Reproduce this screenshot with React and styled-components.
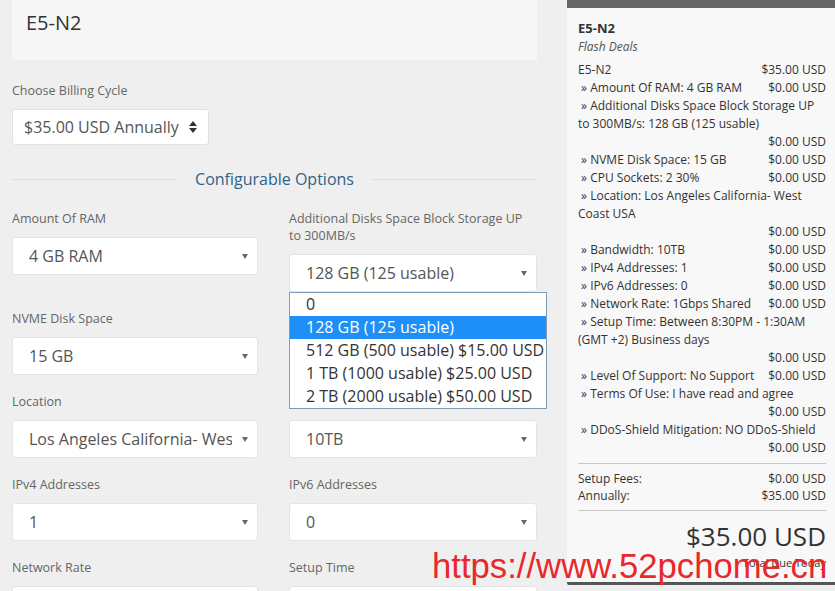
import React from "react";
import styled, { createGlobalStyle } from "styled-components";

const GlobalStyle = createGlobalStyle`
  html, body {
    margin: 0;
    padding: 0;
    background: #efefef;
    overflow: hidden;
  }
  body {
    font-family: "Open Sans", "Liberation Sans", sans-serif;
  }
`;

const Page = styled.div`
  position: relative;
  display: flex;
  gap: 30px;
  width: 835px;
  height: 591px;
  overflow: hidden;
  padding-left: 12px;
  box-sizing: border-box;
`;

const Main = styled.div`
  width: 525px;
  flex-shrink: 0;
`;

const ProductBox = styled.div`
  background: #f7f7f7;
  height: 60px;
  padding: 9px 14px 0;
  box-sizing: border-box;
  font-size: 20px;
  line-height: 27px;
  color: #333;
`;

const Label = styled.div`
  font-size: 12.5px;
  line-height: 17px;
  color: #666;
  padding-right: 12px;
  margin-top: ${(p) => p.$top || 0}px;
  margin-bottom: 10px;
`;

const BillingSelect = styled.div`
  width: 197px;
  height: 36px;
  box-sizing: border-box;
  background: #fff;
  border: 1px solid #e2e2e2;
  border-radius: 3px;
  padding: 0 11px 0 11px;
  display: flex;
  align-items: center;
  justify-content: space-between;
  font-size: 16px;
  color: #555;
`;

const Heading = styled.div`
  margin-top: 23px;
  display: flex;
  align-items: center;
  gap: 18px;
  font-size: 16px;
  line-height: 22px;
  color: #2f6389;

  &::before,
  &::after {
    content: "";
    flex: 1;
    height: 1px;
    background: #dcdcdc;
  }
`;

const Grid = styled.div`
  margin-top: 20px;
  display: grid;
  grid-template-columns: 246px 248px;
  column-gap: 31px;
  row-gap: 18px;
  align-items: start;
`;

const Field = styled.div`
  position: relative;
`;

const Select = styled.div`
  height: 38px;
  box-sizing: border-box;
  background: #fff;
  border: 1px solid #e4e4e4;
  border-radius: 3px;
  padding: 0 9px 0 16px;
  display: flex;
  align-items: center;
  gap: 10px;
  font-size: 16px;
  color: #555;
`;

const Value = styled.span`
  flex: 1;
  white-space: nowrap;
  overflow: hidden;
`;

const Caret = styled.span`
  width: 0;
  height: 0;
  border-left: 3.5px solid transparent;
  border-right: 3.5px solid transparent;
  border-top: 5px solid #666;
`;

const OptionList = styled.div`
  position: absolute;
  left: 0;
  top: 100%;
  width: 258px;
  box-sizing: border-box;
  background: #fff;
  border: 1px solid #7f9db9;
  z-index: 5;
`;

const Option = styled.div`
  font-size: 16px;
  line-height: 23px;
  padding-left: 16px;
  white-space: nowrap;
  color: ${(p) => (p.$active ? "#fff" : "#333")};
  background: ${(p) => (p.$active ? "#1e8ff7" : "transparent")};
`;

const Sidebar = styled.div`
  width: 268px;
  flex-shrink: 0;
  align-self: flex-start;
  background: #f8f8f8;
  border-top: 8px solid #666;
  border-bottom: 3px solid #555;
  border-bottom-left-radius: 2px;
  padding: 11px 9px 12px 11px;
  box-sizing: border-box;
  color: #333;
  font-size: 12px;
  line-height: 18px;
`;

const SumTitle = styled.div`
  font-size: 13px;
  font-weight: 700;
  line-height: 18px;
`;

const SumSub = styled.div`
  font-style: italic;
  color: #555;
  margin-top: 1px;
  margin-bottom: 5px;
`;

const Item = styled.div`
  display: flex;
  flex-wrap: wrap;
  justify-content: space-between;
  line-height: ${(p) => p.$lh || 18}px;
`;

const Price = styled.span`
  margin-left: auto;
  white-space: nowrap;
`;

const Rule = styled.div`
  height: 1px;
  background: #c8c8c8;
  margin: 6px 0;
`;

const Total = styled.div`
  text-align: right;
  font-size: 26px;
  line-height: 30px;
  margin-top: 10px;
`;

const TotalNote = styled.div`
  text-align: right;
  font-size: 11px;
  line-height: 14px;
  margin-top: 5px;
`;

const Watermark = styled.div`
  position: absolute;
  left: 432px;
  top: 549px;
  font-family: "Liberation Sans", Arial, sans-serif;
  font-size: 34.7px;
  line-height: 1;
  color: #e8282b;
  white-space: nowrap;
  z-index: 10;
`;

const UpDown = () => (
  <svg width="8" height="12" viewBox="0 0 8 12">
    <path d="M4 0 L8 5 L0 5 Z" fill="#333" />
    <path d="M0 7 L8 7 L4 12 Z" fill="#333" />
  </svg>
);

const fields = [
  { label: "Amount Of RAM", value: "4 GB RAM" },
  { label: "Additional Disks Space Block Storage UP to 300MB/s", value: "128 GB (125 usable)", open: true },
  { label: "NVME Disk Space", value: "15 GB" },
  { label: "CPU Sockets", value: "2 30%" },
  { label: "Location", value: "Los Angeles California- West Coast USA" },
  { label: "Bandwidth", value: "10TB" },
  { label: "IPv4 Addresses", value: "1" },
  { label: "IPv6 Addresses", value: "0" },
  { label: "Network Rate", value: "1Gbps Shared" },
  { label: "Setup Time", value: "Between 8:30PM - 1:30AM" },
];

const diskOptions = [
  "0",
  "128 GB (125 usable)",
  "512 GB (500 usable) $15.00 USD",
  "1 TB (1000 usable) $25.00 USD",
  "2 TB (2000 usable) $50.00 USD",
];

const lines = [
  ["E5-N2", "$35.00 USD"],
  ["\u00a0» Amount Of RAM: 4 GB RAM", "$0.00 USD"],
  ["\u00a0» Additional Disks Space Block Storage UP to 300MB/s: 128 GB (125 usable)", "$0.00 USD"],
  ["\u00a0» NVME Disk Space: 15 GB", "$0.00 USD"],
  ["\u00a0» CPU Sockets: 2 30%", "$0.00 USD"],
  ["\u00a0» Location: Los Angeles California- West Coast USA", "$0.00 USD"],
  ["\u00a0» Bandwidth: 10TB", "$0.00 USD"],
  ["\u00a0» IPv4 Addresses: 1", "$0.00 USD"],
  ["\u00a0» IPv6 Addresses: 0", "$0.00 USD"],
  ["\u00a0» Network Rate: 1Gbps Shared", "$0.00 USD"],
  ["\u00a0» Setup Time: Between 8:30PM - 1:30AM (GMT +2) Business days", "$0.00 USD"],
  ["\u00a0» Level Of Support: No Support", "$0.00 USD"],
  ["\u00a0» Terms Of Use: I have read and agree", "$0.00 USD"],
  ["\u00a0» DDoS-Shield Mitigation: NO DDoS-Shield", "$0.00 USD"],
];

export default function App() {
  return (
    <Page>
      <GlobalStyle />
      <Main>
        <ProductBox>E5-N2</ProductBox>

        <Label $top={22}>Choose Billing Cycle</Label>
        <BillingSelect>
          <span>$35.00 USD Annually</span>
          <UpDown />
        </BillingSelect>

        <Heading>Configurable Options</Heading>

        <Grid>
          {fields.map((f) => (
            <Field key={f.label}>
              <Label>{f.label}</Label>
              <Select>
                <Value>{f.value}</Value>
                <Caret />
              </Select>
              {f.open && (
                <OptionList>
                  {diskOptions.map((o, i) => (
                    <Option key={o} $active={i === 1}>
                      {o}
                    </Option>
                  ))}
                </OptionList>
              )}
            </Field>
          ))}
        </Grid>
      </Main>

      <Sidebar>
        <SumTitle>E5-N2</SumTitle>
        <SumSub>Flash Deals</SumSub>
        {lines.map(([name, price], i) => (
          <Item key={i}>
            <span>{name}</span>
            <Price>{price}</Price>
          </Item>
        ))}
        <Rule />
        <Item $lh={17}>
          <span>Setup Fees:</span>
          <Price>$0.00 USD</Price>
        </Item>
        <Item $lh={17}>
          <span>Annually:</span>
          <Price>$35.00 USD</Price>
        </Item>
        <Rule />
        <Total>$35.00 USD</Total>
        <TotalNote>Total Due Today</TotalNote>
      </Sidebar>

      <Watermark>https://www.52pchome.cn</Watermark>
    </Page>
  );
}
